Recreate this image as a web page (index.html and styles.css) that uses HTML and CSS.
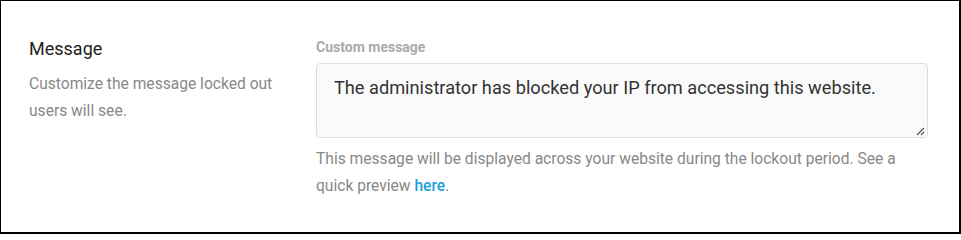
FILE: index.html
```html
<!DOCTYPE html>
<html>
<head>
<meta charset="utf-8">
<link rel="stylesheet" href="styles.css">
</head>
<body>
<div class="frame">
  <div class="row">
    <div class="side">
      <h3 class="title">Message</h3>
      <p class="desc">Customize the message locked out users will see.</p>
    </div>
    <div class="main">
      <label class="label">Custom message</label>
      <div class="textarea">The administrator has blocked your IP from accessing this website.<span class="grip"><svg width="9" height="9" viewBox="0 0 9 9"><path d="M8 1L1 8M8 5L5 8" stroke="#555" stroke-width="1.2" fill="none"/></svg></span></div>
      <p class="help">This message will be displayed across your website during the lockout period. See a quick preview <a class="link" href="#">here</a>.</p>
    </div>
  </div>
</div>
</body>
</html>
```

FILE: styles.css
```css
* { box-sizing: border-box; }
html, body { margin: 0; padding: 0; background: #fff; }
body { font-family: Roboto, "Liberation Sans", sans-serif; }
.frame {
  width: 961px;
  height: 234px;
  border-style: solid;
  border-color: #000;
  border-width: 1px 2px 2px 1px;
  background: #fff;
  padding: 35px 31px 0 28px;
}
.row { display: flex; }
.side { width: 287px; flex: none; padding-right: 6px; }
.title {
  margin: 0;
  font-size: 18px;
  font-weight: 400;
  line-height: 26px;
  color: #222;
}
.desc {
  margin: 9px 0 0;
  font-size: 15.6px;
  line-height: 27px;
  color: #888;
}
.main { flex: 1; }
.label {
  display: block;
  font-size: 14px;
  font-weight: 700;
  color: #aaa;
  line-height: 22px;
}
.textarea {
  position: relative;
  margin-top: 5px;
  height: 75px;
  background: #fafafa;
  border: 1px solid #ddd;
  border-radius: 4px;
  padding: 12px 17px;
  font-size: 18.2px;
  line-height: 24px;
  color: #333;
}
.grip { position: absolute; right: 2px; bottom: 1px; line-height: 0; }
.help {
  margin: 8px 0 0;
  font-size: 15.6px;
  line-height: 27px;
  color: #888;
}
.link { color: #1a9fd9; font-weight: 500; text-decoration: none; }
```
